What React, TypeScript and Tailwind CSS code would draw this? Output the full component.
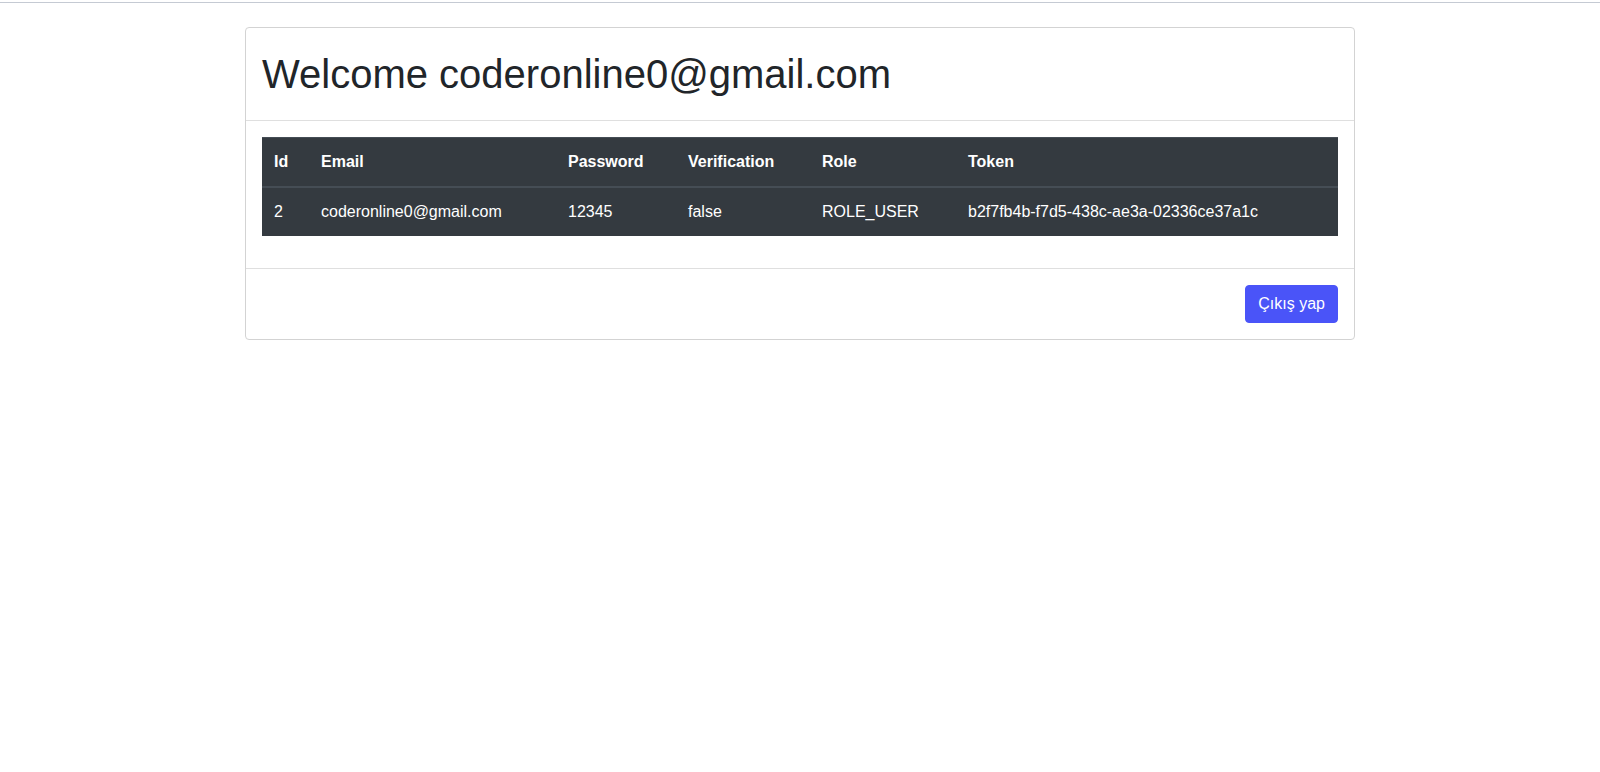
export default function App() {
  const font = { fontFamily: '"Liberation Sans", Arial, Helvetica, sans-serif' };
  return (
    <div className="min-h-[772px] bg-white text-[#212529]" style={font}>
      <div className="h-[2px]" />
      <div className="h-px bg-[#c5cad3]" />
      <div className="mx-auto mt-6 w-[1110px]">
        <div className="rounded border border-[#d3d3d3]">
          <div className="border-b border-[#dfdfdf] p-4">
            <h1 className="m-0 text-[40px] font-normal leading-[60px]">Welcome coderonline0@gmail.com</h1>
          </div>
          <div className="p-4">
            <table className="mb-4 w-full border-collapse bg-[#343a40] text-left text-base leading-6 text-white">
              <thead>
                <tr>
                  <th className="w-[47px] border-t border-b-2 border-[#454d55] p-3 font-bold">Id</th>
                  <th className="w-[247px] border-t border-b-2 border-[#454d55] p-3 font-bold">Email</th>
                  <th className="w-[120px] border-t border-b-2 border-[#454d55] p-3 font-bold">Password</th>
                  <th className="w-[134px] border-t border-b-2 border-[#454d55] p-3 font-bold">Verification</th>
                  <th className="w-[146px] border-t border-b-2 border-[#454d55] p-3 font-bold">Role</th>
                  <th className="border-t border-b-2 border-[#454d55] p-3 font-bold">Token</th>
                </tr>
              </thead>
              <tbody>
                <tr>
                  <td className="p-3">2</td>
                  <td className="p-3">coderonline0@gmail.com</td>
                  <td className="p-3">12345</td>
                  <td className="p-3">false</td>
                  <td className="p-3">ROLE_USER</td>
                  <td className="p-3">b2f7fb4b-f7d5-438c-ae3a-02336ce37a1c</td>
                </tr>
              </tbody>
            </table>
          </div>
          <div className="flex justify-end border-t border-[#dfdfdf] p-4">
            <button className="rounded border border-[#4a54f8] bg-[#4a54f8] px-3 py-1.5 text-base leading-6 text-white">
              Çıkış yap
            </button>
          </div>
        </div>
      </div>
    </div>
  );
}
